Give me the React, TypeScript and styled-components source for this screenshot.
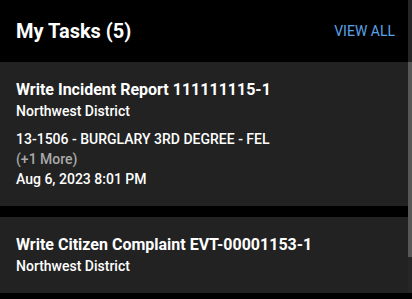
import React from 'react'
import styled, { createGlobalStyle } from 'styled-components'

const GlobalStyle = createGlobalStyle`
    body {
        margin: 0;
        background: #000;
        font-family: Roboto, "Liberation Sans", sans-serif;
        -webkit-font-smoothing: antialiased;
    }
`;

const Widget = styled.div`
    display: flex;
    width: 412px;
    height: 293px;
    background: #000;
`;

const Content = styled.div`
    flex: 1;
    display: flex;
    flex-direction: column;
    overflow: hidden;
`;

const Header = styled.div`
    height: 62px;
    flex-shrink: 0;
    display: flex;
    align-items: center;
    justify-content: space-between;
    padding: 0 13px 0 16px;
`;

const Title = styled.h2`
    margin: 0;
    font-size: 20px;
    font-weight: 700;
    color: #fff;
`;

const ViewAll = styled.a`
    font-size: 14px;
    font-weight: 400;
    color: #5ba3e6;
    text-transform: uppercase;
    cursor: pointer;
`;

const TaskList = styled.div`
    display: flex;
    flex-direction: column;
    gap: 11px;
`;

const TaskCard = styled.div`
    background: #222;
    padding: 17px 16px 17px;
    display: flex;
    flex-direction: column;
`;

const TaskName = styled.div`
    font-size: 16px;
    font-weight: 700;
    line-height: 22px;
    color: #fff;
`;

const Line = styled.div<{ $muted?: boolean; $gap?: number }>`
    font-size: 14px;
    font-weight: 500;
    line-height: 20px;
    color: ${p => (p.$muted ? '#a9a9a9' : '#fff')};
    margin-top: ${p => p.$gap ?? 0}px;
`;

const Scrollbar = styled.div`
    width: 4px;
    background: #262626;
    flex-shrink: 0;
`;

const Thumb = styled.div`
    margin-top: 62px;
    height: 195px;
    background: #575757;
`;

type Task = {
    id: string
    name: string
    district: string
    offense?: string
    more?: number
    date?: string
}

const tasks: Task[] = [
    {
        id: '1',
        name: 'Write Incident Report 111111115-1',
        district: 'Northwest District',
        offense: '13-1506 - BURGLARY 3RD DEGREE - FEL',
        more: 1,
        date: 'Aug 6, 2023 8:01 PM',
    },
    {
        id: '2',
        name: 'Write Citizen Complaint EVT-00001153-1',
        district: 'Northwest District',
    },
]

export default function App() {
    return (
        <>
            <GlobalStyle />
            <Widget>
                <Content>
                    <Header>
                        <Title>My Tasks ({5})</Title>
                        <ViewAll>View All</ViewAll>
                    </Header>
                    <TaskList>
                        {tasks.map(task => (
                            <TaskCard key={task.id}>
                                <TaskName>{task.name}</TaskName>
                                <Line>{task.district}</Line>
                                {task.offense && <Line $gap={8}>{task.offense}</Line>}
                                {task.more && <Line $muted>(+{task.more} More)</Line>}
                                {task.date && <Line>{task.date}</Line>}
                            </TaskCard>
                        ))}
                    </TaskList>
                </Content>
                <Scrollbar>
                    <Thumb />
                </Scrollbar>
            </Widget>
        </>
    )
}
